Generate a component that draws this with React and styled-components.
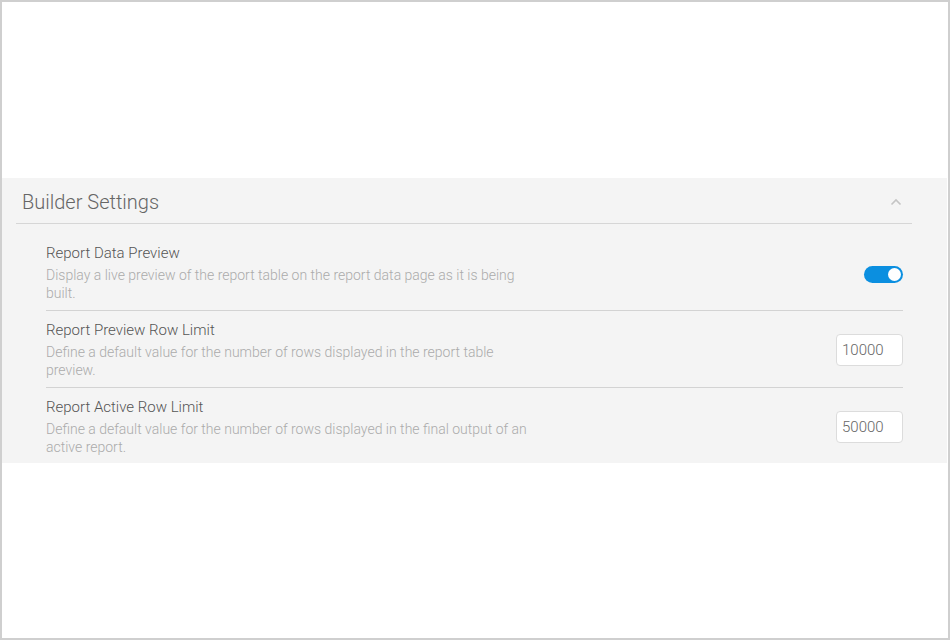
import React from "react";
import styled, { createGlobalStyle } from "styled-components";

const Global = createGlobalStyle`
  html, body { margin: 0; padding: 0; background: #fff; }
  body { font-family: Roboto, "Noto Sans", sans-serif; }
  * { box-sizing: border-box; }
`;

const Frame = styled.div`
  width: 950px;
  height: 640px;
  border: 2px solid #cfcfcf;
  padding-top: 176px;
  padding-right: 1px;
  background: #fff;
`;

const Panel = styled.section`
  background: #f4f4f4;
`;

const Header = styled.div`
  display: flex;
  align-items: center;
  justify-content: space-between;
  height: 46px;
  margin: 0 35px 0 14px;
  padding: 0 6px 0 6px;
  border-bottom: 1px solid #d6d6d6;
`;

const HeaderTitle = styled.h2`
  margin: 0;
  font-size: 20px;
  font-weight: 300;
  color: #666;
  margin-top: 3px;
`;

const Chevron = styled.svg`
  width: 12px;
  height: 8px;
  margin-right: 4px;
  margin-top: 2px;
`;

const Items = styled.div`
  padding: 10px 44px 0 44px;
`;

const Item = styled.div`
  display: flex;
  align-items: center;
  justify-content: space-between;
  padding: 9px 0 ${(p) => (p.$last ? "7px" : "8px")} 0;
  border-bottom: ${(p) => (p.$last ? "none" : "1px solid #d3d3d3")};
`;

const Text = styled.div`
  max-width: 486px;
`;

const Title = styled.div`
  font-size: 15px;
  font-weight: 300;
  line-height: 20px;
  color: #555;
  margin-bottom: 3px;
`;

const Desc = styled.div`
  font-size: 14px;
  font-weight: 300;
  line-height: 18px;
  color: #ababab;
`;

const Toggle = styled.div`
  width: 39px;
  height: 17px;
  border-radius: 9px;
  background: #0b8fe0;
  display: flex;
  align-items: center;
  justify-content: flex-end;
  padding-right: 2px;
  margin-top: 3px;
  flex-shrink: 0;
`;

const Knob = styled.div`
  width: 13px;
  height: 13px;
  border-radius: 50%;
  background: #fff;
`;

const NumberInput = styled.input`
  width: 67px;
  height: 32px;
  border: 1px solid #dcdcdc;
  border-radius: 4px;
  background: #fff;
  font-family: Roboto, "Noto Sans", sans-serif;
  font-size: 15px;
  font-weight: 300;
  color: #666;
  padding: 0 5px;
  outline: none;
  flex-shrink: 0;
`;

const settings = [
  {
    title: "Report Data Preview",
    desc: "Display a live preview of the report table on the report data page as it is being built.",
    type: "toggle",
  },
  {
    title: "Report Preview Row Limit",
    desc: "Define a default value for the number of rows displayed in the report table preview.",
    type: "input",
    value: "10000",
  },
  {
    title: "Report Active Row Limit",
    desc: "Define a default value for the number of rows displayed in the final output of an active report.",
    type: "input",
    value: "50000",
  },
];

export default function App() {
  return (
    <>
      <Global />
      <Frame>
        <Panel>
          <Header>
            <HeaderTitle>Builder Settings</HeaderTitle>
            <Chevron viewBox="0 0 12 8">
              <path d="M1.5 6.5 L6 2 L10.5 6.5" fill="none" stroke="#c4c4c4" strokeWidth="1.6" />
            </Chevron>
          </Header>
          <Items>
            {settings.map((s, i) => (
              <Item key={s.title} $last={i === settings.length - 1}>
                <Text>
                  <Title>{s.title}</Title>
                  <Desc>{s.desc}</Desc>
                </Text>
                {s.type === "toggle" ? (
                  <Toggle>
                    <Knob />
                  </Toggle>
                ) : (
                  <NumberInput defaultValue={s.value} />
                )}
              </Item>
            ))}
          </Items>
        </Panel>
      </Frame>
    </>
  );
}
